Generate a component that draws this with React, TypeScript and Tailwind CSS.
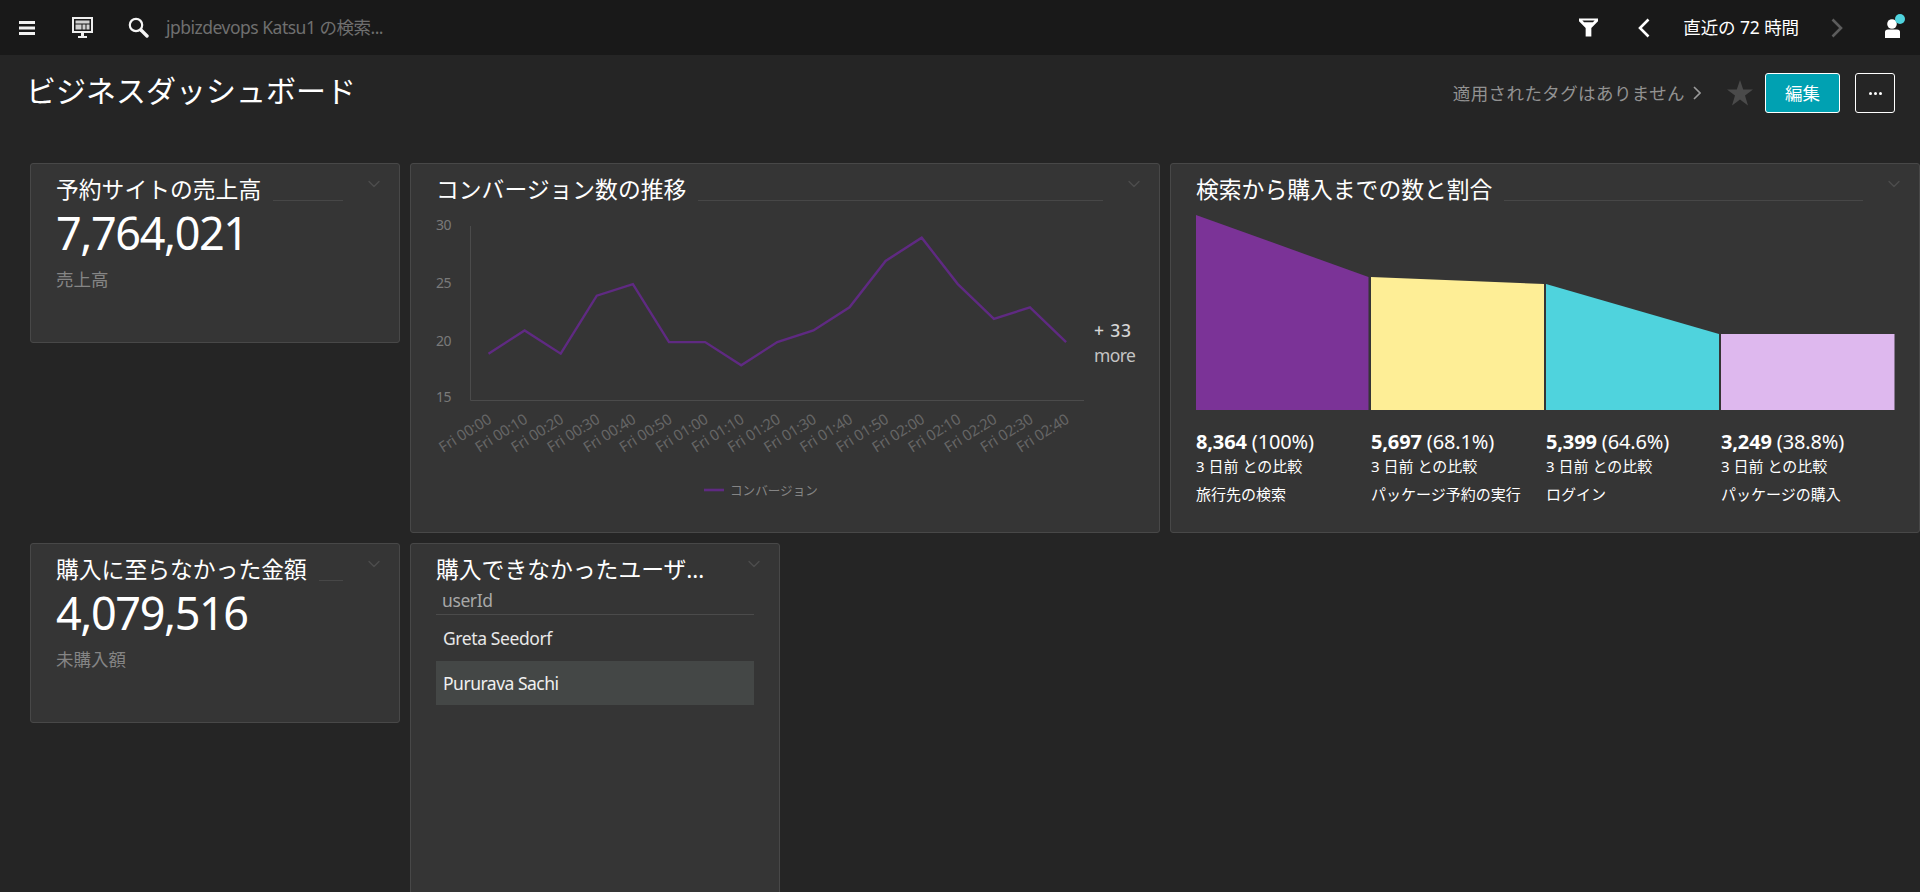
import React from 'react';
import { ChevronDown } from 'lucide-react';

const conversions = [19, 21, 19, 24, 25, 20, 20, 18, 20, 21, 23, 27, 29, 25, 22, 23, 20];
const timeLabels = [
  'Fri 00:00', 'Fri 00:10', 'Fri 00:20', 'Fri 00:30', 'Fri 00:40', 'Fri 00:50',
  'Fri 01:00', 'Fri 01:10', 'Fri 01:20', 'Fri 01:30', 'Fri 01:40', 'Fri 01:50',
  'Fri 02:00', 'Fri 02:10', 'Fri 02:20', 'Fri 02:30', 'Fri 02:40',
];

const funnelSteps = [
  { count: '8,364', pct: '(100%)', label: '旅行先の検索' },
  { count: '5,697', pct: '(68.1%)', label: 'パッケージ予約の実行' },
  { count: '5,399', pct: '(64.6%)', label: 'ログイン' },
  { count: '3,249', pct: '(38.8%)', label: 'パッケージの購入' },
];

const pointX = (i: number) => 488.5 + i * 36.1;
const pointY = (v: number) => 237.7 + (29 - v) * 11.6;

const Card: React.FC<{ title: string; className?: string; truncate?: boolean; children: React.ReactNode }> = ({
  title,
  className = '',
  truncate = false,
  children,
}) => (
  <div className={`relative flex flex-col overflow-hidden rounded-[3px] border border-[#484848] bg-[#353535] ${className}`}>
    <div className="flex h-[50px] shrink-0 items-start pl-[25px] pr-[56px]">
      {truncate ? (
        <h2 className="mt-[8px] w-[272px] shrink-0 truncate text-[22.8px] leading-[36px] text-white">{title}</h2>
      ) : (
        <>
          <h2 className="mt-[8px] shrink-0 text-[22.8px] leading-[36px] text-white">{title}</h2>
          <div className="ml-[12px] mt-[36px] flex-1 border-b border-[#474747]" />
        </>
      )}
    </div>
    <ChevronDown className="absolute right-[15px] top-[10px] h-[20px] w-[20px] text-[#4d4d4d]" strokeWidth={1.5} />
    {children}
  </div>
);

const Metric: React.FC<{ value: string; label: string }> = ({ value, label }) => (
  <div className="mt-[-5px] pl-[25px]">
    <div className="text-[45px] leading-[48px] tracking-[-1.4px] text-white">{value}</div>
    <div className="mt-[9px] text-[17.5px] leading-[26px] text-[#858585]">{label}</div>
  </div>
);

const TopBar: React.FC = () => (
  <header className="flex h-[55px] items-center bg-[#191919] text-white">
    <svg className="ml-[19px] h-[16px] w-[16px]" viewBox="0 0 16 16" fill="#f2f2f2">
      <rect y="1" width="16" height="3" />
      <rect y="6.5" width="16" height="3" />
      <rect y="12" width="16" height="3" />
    </svg>
    <svg className="ml-[37px] h-[22px] w-[22px]" viewBox="0 0 22 22">
      <rect x="0" y="0" width="21" height="16" fill="#eeeeee" />
      <rect x="2" y="2" width="17" height="12" fill="#191919" />
      <rect x="3.5" y="3.5" width="14" height="3" fill="#cfcfcf" />
      <rect x="3.5" y="7.5" width="6" height="5" fill="#cfcfcf" />
      <rect x="10.5" y="7.5" width="3" height="5" fill="#cfcfcf" />
      <rect x="14.5" y="7.5" width="3" height="5" fill="#cfcfcf" />
      <rect x="9" y="16" width="3" height="3" fill="#eeeeee" />
      <rect x="6" y="19" width="9" height="2" fill="#eeeeee" />
    </svg>
    <svg className="ml-[34px] h-[21px] w-[21px]" viewBox="0 0 21 21" fill="none" stroke="#f5f5f5">
      <circle cx="8" cy="8" r="6.2" strokeWidth="2.2" />
      <path d="M13 13 L19 19" strokeWidth="3.4" strokeLinecap="round" />
    </svg>
    <span className="ml-[17px] text-[17.5px] tracking-[-0.5px] text-[#6f6f6f]">jpbizdevops Katsu1 の検索...</span>
    <div className="ml-auto flex items-center">
      <svg className="h-[19px] w-[19px]" viewBox="0 0 20 19" fill="#ffffff">
        <path fillRule="evenodd" d="M0 0 H20 V3 L13 10 V19 H7 V10 L0 3 Z M3.5 2.2 L5.4 4 H14.6 L16.5 2.2 Z" />
      </svg>
      <svg className="ml-[40px] h-[20px] w-[12px]" viewBox="0 0 12 20" fill="none" stroke="#ffffff" strokeWidth="2.6">
        <path d="M10.5 1.5 L2 10 L10.5 18.5" />
      </svg>
      <span className="ml-[33px] text-[17.5px] tracking-[-0.1px] text-white">直近の 72 時間</span>
      <svg className="ml-[32px] h-[20px] w-[12px]" viewBox="0 0 12 20" fill="none" stroke="#5c5c5c" strokeWidth="2.6">
        <path d="M1.5 1.5 L10 10 L1.5 18.5" />
      </svg>
      <div className="relative ml-[42px] mr-[20px] h-[20px] w-[15px]">
        <svg className="h-[20px] w-[15px]" viewBox="0 0 15 20" fill="#ffffff">
          <circle cx="7" cy="6" r="4.8" />
          <path d="M0 20 V14 Q0 11.5 3 11.5 H12 Q15 11.5 15 14 V20 Z" />
        </svg>
        <span className="absolute left-[10px] top-[-4px] h-[10px] w-[10px] rounded-full bg-[#4fd3dd]" />
      </div>
    </div>
  </header>
);

const TitleBar: React.FC = () => (
  <div className="flex h-[108px] items-start">
    <h1 className="ml-[26px] mt-[14px] text-[30px] leading-[44px] text-white">ビジネスダッシュボード</h1>
    <div className="ml-auto mr-[25px] mt-[18px] flex items-center">
      <span className="text-[17.5px] tracking-[0.4px] text-[#929292]">適用されたタグはありません</span>
      <svg className="ml-[8px] h-[14px] w-[8px]" viewBox="0 0 8 14" fill="none" stroke="#9a9a9a" strokeWidth="1.6">
        <path d="M1 1 L7 7 L1 13" />
      </svg>
      <svg className="ml-[26px] h-[26px] w-[26px]" viewBox="0 0 26 26" fill="#4a4a4a">
        <path d="M13 0 L16.2 9.6 L26 9.6 L18 15.6 L21 25.5 L13 19.5 L5 25.5 L8 15.6 L0 9.6 L9.8 9.6 Z" />
      </svg>
      <button className="ml-[12px] h-[40px] w-[75px] rounded-[3px] border border-white bg-[#00a1b2] text-[17.5px] text-white">編集</button>
      <button className="ml-[15px] h-[40px] w-[40px] rounded-[3px] border border-white text-white">
        <span className="flex items-center justify-center gap-[2px]">
          <span className="h-[3px] w-[3px] rounded-full bg-white" />
          <span className="h-[3px] w-[3px] rounded-full bg-white" />
          <span className="h-[3px] w-[3px] rounded-full bg-white" />
        </span>
      </button>
    </div>
  </div>
);

const ConversionChart: React.FC = () => {
  const points = conversions.map((v, i) => `${pointX(i)},${pointY(v)}`).join(' ');
  return (
    <svg className="h-[318px] w-[748px] shrink-0" viewBox="411 214 748 318">
      {[30, 25, 20, 15].map((tick, i) => (
        <text key={tick} x="436" y={[230, 288, 346, 402][i]} fontSize="14" letterSpacing="-0.4" fill="#7a7a7a">
          {tick}
        </text>
      ))}
      <path d="M470.5 226 V400.5 H1084" fill="none" stroke="#4b4b4b" />
      <polyline points={points} fill="none" stroke="#5f2a82" strokeWidth="2.4" />
      {timeLabels.map((label, i) => (
        <text
          key={label}
          x={pointX(i) + 4}
          y="422"
          fontSize="15"
          letterSpacing="-0.2"
          fill="#666666"
          textAnchor="end"
          transform={`rotate(-32 ${pointX(i) + 4} 422)`}
        >
          {label}
        </text>
      ))}
      <text x="1094" y="337" fontSize="17.5" fontWeight="500" letterSpacing="0.8" fill="#d6d6d6">+ 33</text>
      <text x="1094" y="362" fontSize="17.5" letterSpacing="-0.6" fill="#c4c4c4">more</text>
      <path d="M704 490 H724" stroke="#5f2a82" strokeWidth="2.6" />
      <text x="730" y="494.5" fontSize="12.6" fill="#858585">コンバージョン</text>
    </svg>
  );
};

const Funnel: React.FC = () => (
  <>
    <svg className="h-[196px] w-[748px] shrink-0" viewBox="1171 214 748 196">
      <polygon points="1196,215 1368.5,277 1368.5,410 1196,410" fill="#7b3397" />
      <polygon points="1371,277 1544,284 1544,410 1371,410" fill="#feee96" />
      <polygon points="1546,284 1719,334 1719,410 1546,410" fill="#4fd3dd" />
      <polygon points="1721,334 1894.5,334 1894.5,410 1721,410" fill="#deb8ee" />
    </svg>
    <div className="mt-[20px] grid grid-cols-[175px_175px_175px_175px] pl-[25px] text-white">
      {funnelSteps.map((step) => (
        <div key={step.count}>
          <div className="text-[20px] leading-[24px] tracking-[-0.15px]">
            <span className="font-bold">{step.count}</span> {step.pct}
          </div>
          <div className="text-[15px] leading-[24px]">3 日前 との比較</div>
          <div className="mt-[4px] whitespace-nowrap text-[15px] leading-[24px]">{step.label}</div>
        </div>
      ))}
    </div>
  </>
);

const UserTable: React.FC = () => (
  <div className="ml-[25px] mt-[-7px] w-[318px]">
    <div className="border-b border-[#4b4b4b] pl-[6px] text-[17.5px] leading-[27px] tracking-[-0.4px] text-[#a8a8a8]">userId</div>
    <div className="flex h-[46px] items-center pl-[7px] text-[17.5px] tracking-[-0.4px] text-[#e8e8e8]">Greta Seedorf</div>
    <div className="flex h-[44px] items-center bg-[#444746] pl-[7px] text-[17.5px] tracking-[-0.5px] text-[#f0f0f0]">Pururava Sachi</div>
  </div>
);

const App: React.FC = () => (
  <div className="h-screen overflow-hidden bg-[#252525] font-['Noto_Sans','Noto_Sans_CJK_JP',sans-serif]">
    <TopBar />
    <TitleBar />
    <div className="ml-[30px] grid grid-cols-[370px_750px_750px] grid-rows-[180px_180px_180px_180px] gap-[10px]">
      <Card title="予約サイトの売上高">
        <Metric value="7,764,021" label="売上高" />
      </Card>
      <Card title="コンバージョン数の推移" className="row-span-2">
        <ConversionChart />
      </Card>
      <Card title="検索から購入までの数と割合" className="row-span-2">
        <Funnel />
      </Card>
      <Card title="購入に至らなかった金額" className="col-start-1 row-start-3">
        <Metric value="4,079,516" label="未購入額" />
      </Card>
      <div className="col-start-2 row-span-2 row-start-3 w-[370px]">
        <Card title="購入できなかったユーザー一覧" truncate className="h-full">
          <UserTable />
        </Card>
      </div>
    </div>
  </div>
);

export default App;
